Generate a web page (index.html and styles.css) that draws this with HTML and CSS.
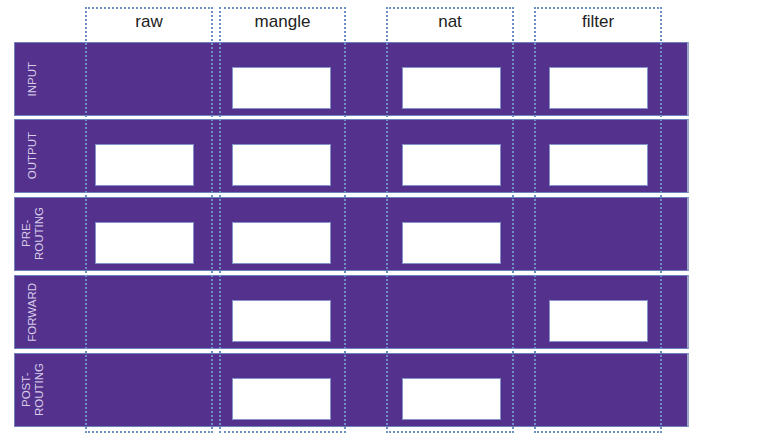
FILE: index.html
```html
<!DOCTYPE html>
<html lang="en">
<head>
    <meta charset="UTF-8">
    <meta name="viewport" content="width=device-width, initial-scale=1.0">
    <title>iptables tables and chains</title>
    <link rel="stylesheet" href="styles.css">
</head>
<body>
    <div class="chart">
        <!-- chain bands -->
        <div class="band r1"></div>
        <div class="band r2"></div>
        <div class="band r3"></div>
        <div class="band r4"></div>
        <div class="band r5"></div>

        <div class="label r1"><span>INPUT</span></div>
        <div class="label r2"><span>OUTPUT</span></div>
        <div class="label r3"><span>PRE-<br>ROUTING</span></div>
        <div class="label r4"><span>FORWARD</span></div>
        <div class="label r5"><span>POST-<br>ROUTING</span></div>

        <!-- INPUT -->
        <div class="box r1 mangle"></div>
        <div class="box r1 nat"></div>
        <div class="box r1 filter"></div>
        <!-- OUTPUT -->
        <div class="box r2 raw"></div>
        <div class="box r2 mangle"></div>
        <div class="box r2 nat"></div>
        <div class="box r2 filter"></div>
        <!-- PREROUTING -->
        <div class="box r3 raw"></div>
        <div class="box r3 mangle"></div>
        <div class="box r3 nat"></div>
        <!-- FORWARD -->
        <div class="box r4 mangle"></div>
        <div class="box r4 filter"></div>
        <!-- POSTROUTING -->
        <div class="box r5 mangle"></div>
        <div class="box r5 nat"></div>

        <!-- table columns -->
        <div class="table raw">raw</div>
        <div class="table mangle">mangle</div>
        <div class="table nat">nat</div>
        <div class="table filter">filter</div>
    </div>
</body>
</html>
```

FILE: styles.css
```css
body {
    margin: 0;
    padding: 0;
    background: #fff;
    font-family: "Liberation Sans", Arial, sans-serif;
}

.chart {
    display: grid;
    margin: 7px 0 0 14px;
    width: 675px;
    grid-template-columns: 71px 128px 6px 127px 40px 128px 20px 128px 27px;
    grid-template-rows: 35px 74px 3px 74px 4px 74px 4px 74px 4px 74px 6px;
}

/* rows */
.r1 { grid-row: 2; }
.r2 { grid-row: 4; }
.r3 { grid-row: 6; }
.r4 { grid-row: 8; }
.r5 { grid-row: 10; }

.band {
    grid-column: 1 / -1;
    background-color: #54318c;
    border: 1px solid #6f82bd;
    border-right: 2px solid #9aa6c9;
}

.label {
    grid-column: 1;
    width: 37px;
    display: flex;
    align-items: center;
    justify-content: center;
}

.label span {
    writing-mode: vertical-rl;
    transform: rotate(180deg);
    text-align: center;
    font-size: 11.5px;
    line-height: 13px;
    color: #d8cdea;
}

/* columns */
.raw { grid-column: 2; }
.mangle { grid-column: 4; }
.nat { grid-column: 6; }
.filter { grid-column: 8; }

.box {
    align-self: start;
    justify-self: start;
    width: 99px;
    height: 42px;
    margin-top: 25px;
    box-sizing: border-box;
    background-color: #fff;
    border: 1px solid #8393c9;
}

.box.raw { margin-left: 10px; }
.box.mangle { margin-left: 13px; }
.box.nat { margin-left: 16px; }
.box.filter { margin-left: 15px; }

.table {
    grid-row: 1 / -1;
    border: 2px dotted #6d8fc4;
    text-align: center;
    font-size: 17px;
    color: #222;
    padding-top: 3px;
    z-index: 1;
}
```
